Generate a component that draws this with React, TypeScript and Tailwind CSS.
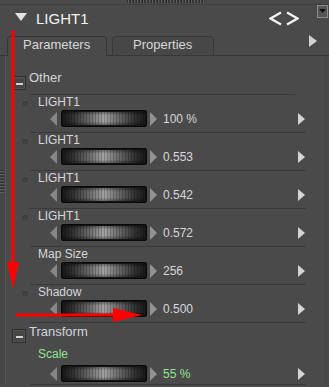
import React from "react";

function LeftTri({ className, fill }: { className: string; fill: string }) {
  return (
    <svg className={className} viewBox="0 0 7 14">
      <polygon points="7,0 7,14 0,7" fill={fill} />
    </svg>
  );
}

function RightTri({ className, fill }: { className: string; fill: string }) {
  return (
    <svg className={className} viewBox="0 0 7 14" preserveAspectRatio="none">
      <polygon points="0,0 7,7 0,14" fill={fill} />
    </svg>
  );
}

function Wheel() {
  return (
    <div className="ml-[4px] w-[86px] h-[17px] rounded-[2px] border border-[#080808] shadow-[inset_0_0_0_1px_#151515] bg-[image:repeating-linear-gradient(90deg,rgba(0,0,0,0.2)_0_1px,transparent_1px_3px),linear-gradient(180deg,rgba(0,0,0,0.45),transparent_30%,transparent_70%,rgba(0,0,0,0.45)),linear-gradient(90deg,#181818,#333333_14%,#6e6e6e_34%,#a2a2a2_50%,#6e6e6e_66%,#333333_86%,#181818)]" />
  );
}

type RowProps = {
  label: string;
  value: string;
  dot?: boolean;
  green?: boolean;
  sliderClass?: string;
  sepClass?: string;
};

function ParamRow({
  label,
  value,
  dot = true,
  green = false,
  sliderClass = "mt-[1px]",
  sepClass = "mt-[5px]",
}: RowProps) {
  const color = green ? "text-[#8fe48f]" : "text-[#d6d6da]";
  return (
    <div className="flex flex-col">
      <div className="flex h-[14px] items-start">
        {dot ? (
          <div className="ml-[16px] mt-[6px] w-[6px] h-[6px] rounded-full bg-[#434343] shadow-[0_0_0_1px_#4f4f4f,inset_0_1px_1px_#383838]" />
        ) : (
          <div className="ml-[16px] w-[6px] h-[6px]" />
        )}
        <span className={`ml-[10px] text-[12px] leading-[14px] ${color}`}>{label}</span>
      </div>
      <div className={`${sliderClass} h-[17px] flex items-center`}>
        <LeftTri className="ml-[44px] w-[7px] h-[14px]" fill="#868686" />
        <Wheel />
        <RightTri className="ml-[3px] w-[7px] h-[14px]" fill="#929292" />
        <span className={`ml-[6px] text-[12px] leading-[14px] ${color}`}>{value}</span>
        <RightTri className="ml-auto mr-[20px] w-[7px] h-[12px]" fill="#d4d4d4" />
      </div>
      <div className={`${sepClass} ml-[24px] w-[276px] h-px bg-[#3a3a3a]`} />
    </div>
  );
}

function MinusBox() {
  return (
    <div className="w-[14px] h-[14px] border border-[#2e2e2e] bg-[#474747] shadow-[inset_0_0_0_1px_#525252] flex items-end justify-center pb-[4px]">
      <div className="w-[7px] h-[2px] bg-[#d2d2d2]" />
    </div>
  );
}

export default function App() {
  return (
    <div className="relative w-[329px] h-[387px] overflow-hidden bg-[#4a4a4a] font-['Liberation_Sans',Arial,sans-serif] select-none">
      {/* header */}
      <div className="flex flex-col h-[36px]">
        <div className="h-[4px] pl-[127px]">
          <div className="w-[78px] h-[3px] rounded-b-[2px] bg-[image:repeating-linear-gradient(90deg,#2e2e2e_0_1px,#5c5c5c_1px_2px,#3a3a3a_2px_3px)]" />
        </div>
        <div className="flex h-[32px] items-start border-t border-[#3e3e3e] pl-[15px]">
          <svg className="mt-[8px] w-[12px] h-[8px]" viewBox="0 0 12 8">
            <polygon points="0,0 12,0 6,8" fill="#e2e2e2" />
          </svg>
          <span className="ml-[9px] mt-[5px] text-[15px] leading-[18px] text-[#f2f2f2]">LIGHT1</span>
          <svg className="ml-auto mt-[6px] w-[30px] h-[15px]" viewBox="0 0 30 15">
            <polyline points="12,1.5 1.5,7.5 12,13.5" fill="none" stroke="#f4f4f4" strokeWidth="2.2" />
            <polyline points="18,1.5 28.5,7.5 18,13.5" fill="none" stroke="#f4f4f4" strokeWidth="2.2" />
          </svg>
          <div className="ml-[18px] mr-[1px] w-[11px] h-[13px] border border-[#8c8c8c] bg-[#565656] flex justify-center pt-[3px]">
            <svg className="w-[7px] h-[4px]" viewBox="0 0 7 4">
              <polygon points="0,0 7,0 3.5,4" fill="#111111" />
            </svg>
          </div>
        </div>
      </div>

      {/* tabs */}
      <div className="flex h-[20px]">
        <div className="w-[7px] border-b border-[#383838]" />
        <div className="w-[100px] border-t border-l border-r border-[#383838] rounded-t-[4px] pl-[15px] text-[13px] leading-[16px] text-[#d8d8d8]">
          Parameters
        </div>
        <div className="w-[5px] border-b border-[#383838]" />
        <div className="w-[102px] border border-[#383838] rounded-t-[4px] bg-[#474747] pl-[20px] text-[13px] leading-[16px] text-[#d8d8d8]">
          Properties
        </div>
        <div className="flex-1 border-b border-[#383838] flex justify-end pr-[12px]">
          <svg className="-mt-[1px] w-[8px] h-[12px]" viewBox="0 0 8 12">
            <polygon points="0,0 8,6 0,12" fill="#d2d2d2" />
          </svg>
        </div>
      </div>

      {/* content */}
      <div className="flex">
        <div className="w-[6px] border-r border-[#575757] bg-[#464646] flex flex-col">
          <div className="mt-[114px] w-[4px] h-[23px] bg-[image:repeating-linear-gradient(180deg,#333333_0_1px,#5e5e5e_1px_2px,#414141_2px_3px)]" />
        </div>
        <div className="w-[320px] border-r border-[#454545] flex flex-col">
          {/* Other group */}
          <div className="flex h-[38px] items-start pl-[6px]">
            <div className="mt-[20px]">
              <MinusBox />
            </div>
            <span className="ml-[3px] mt-[14px] text-[13px] leading-[16px] text-[#cdd6de]">Other</span>
          </div>
          <div className="ml-[24px] w-[265px] h-px bg-[#3a3a3a]" />
          <ParamRow label="LIGHT1" value="100 %" />
          <ParamRow label="LIGHT1" value="0.553" />
          <ParamRow label="LIGHT1" value="0.542" />
          <ParamRow label="LIGHT1" value="0.572" />
          <ParamRow label="Map Size" value="256" dot={false} />
          <ParamRow label="Shadow" value="0.500" />
          {/* Transform group */}
          <div className="flex h-[24px] items-start pl-[6px]">
            <div className="mt-[6px]">
              <MinusBox />
            </div>
            <span className="ml-[3px] mt-[1px] text-[13px] leading-[16px] text-[#cdd6de]">Transform</span>
          </div>
          <ParamRow label="Scale" value="55 %" dot={false} green sliderClass="mt-[4px]" sepClass="mt-[2px]" />
        </div>
      </div>

      {/* red annotation arrows */}
      <svg className="absolute inset-0 w-[329px] h-[387px] pointer-events-none" viewBox="0 0 329 387">
        <line x1="13" y1="30" x2="13" y2="266" stroke="#ff0000" strokeWidth="3" />
        <polygon points="7,262 19,262 13,289" fill="#ff0000" />
        <line x1="16" y1="315" x2="118" y2="315" stroke="#ff0000" strokeWidth="3" />
        <polygon points="113,308 142,315 113,322" fill="#ff0000" />
      </svg>
    </div>
  );
}
